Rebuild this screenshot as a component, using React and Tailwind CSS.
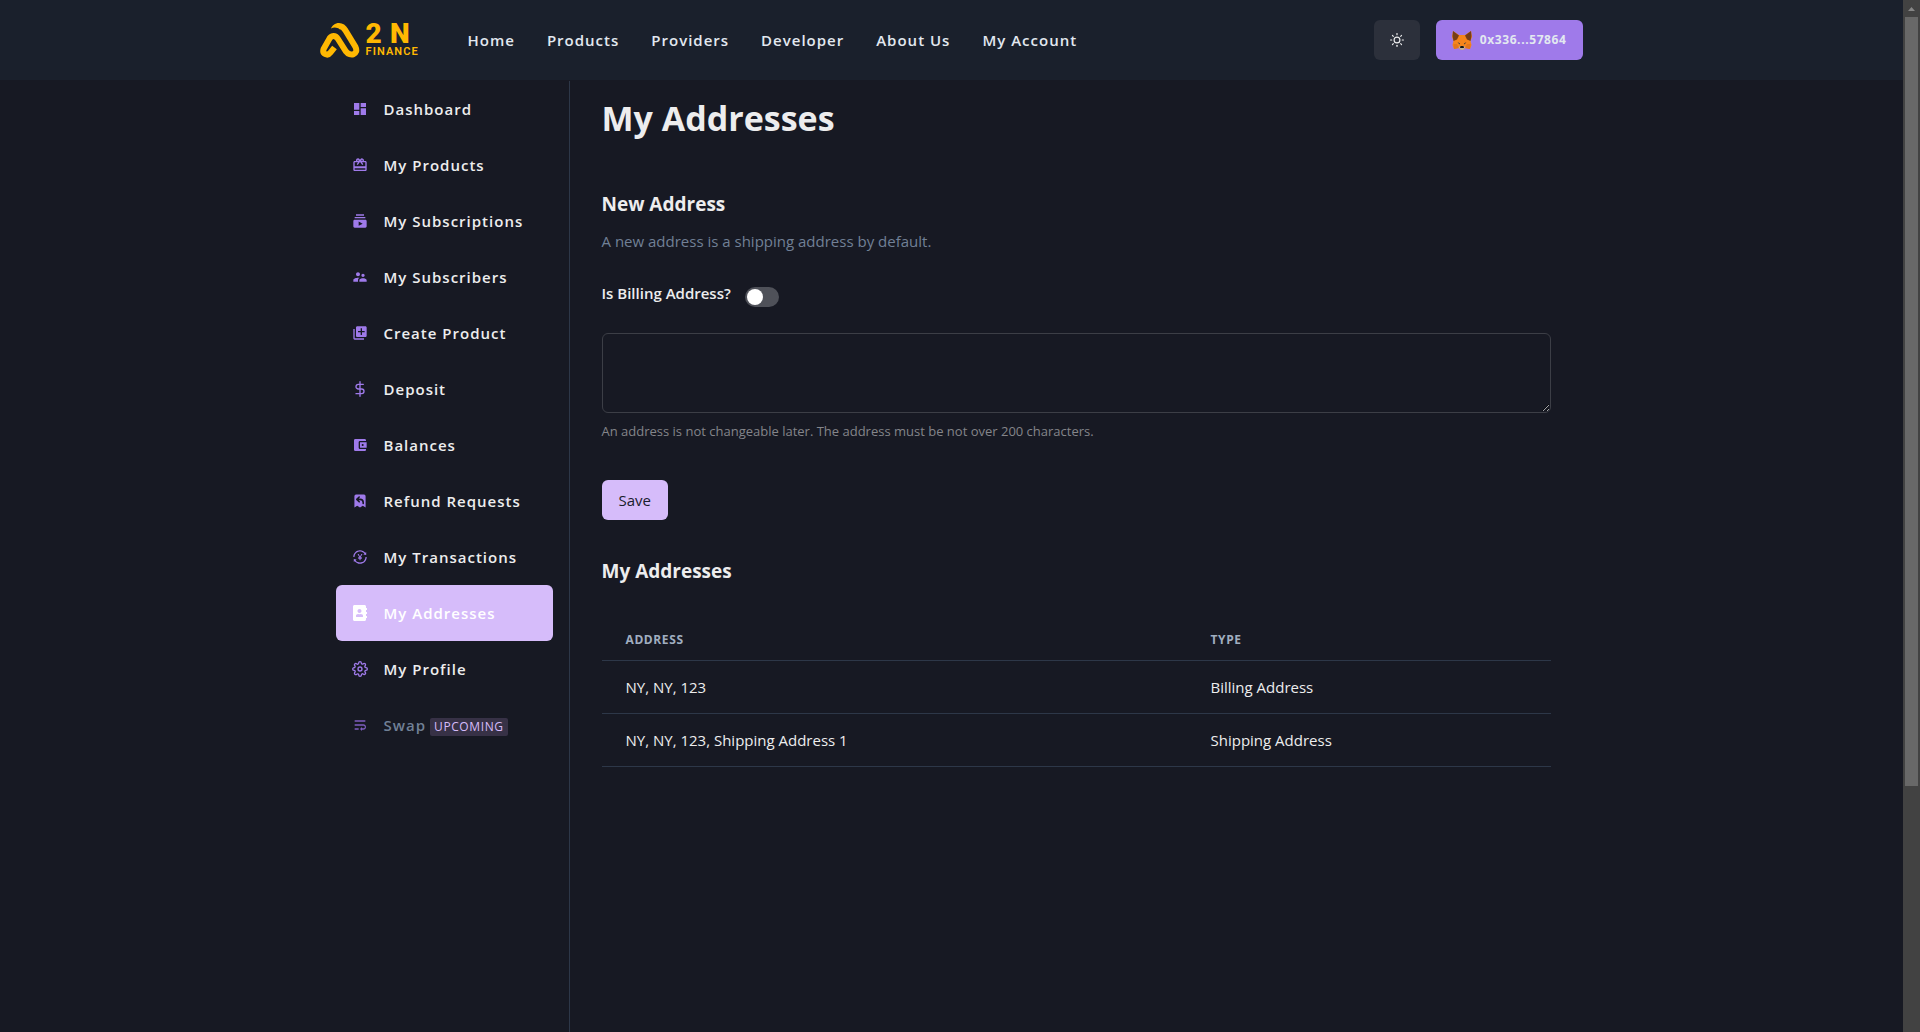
import React, { useState } from 'react';
import {
  MdDashboard,
  MdRedeem,
  MdSubscriptions,
  MdSupervisorAccount,
  MdLibraryAdd,
  MdAccountBalanceWallet,
  MdWrapText,
} from 'react-icons/md';
import { FiDollarSign, FiSettings, FiSun } from 'react-icons/fi';
import { HiReceiptRefund } from 'react-icons/hi';
import { AiOutlineTransaction } from 'react-icons/ai';
import { FaAddressBook } from 'react-icons/fa';

const navLinks = ['Home', 'Products', 'Providers', 'Developer', 'About Us', 'My Account'];

const sideLinks = [
  { label: 'Dashboard', icon: MdDashboard },
  { label: 'My Products', icon: MdRedeem },
  { label: 'My Subscriptions', icon: MdSubscriptions },
  { label: 'My Subscribers', icon: MdSupervisorAccount },
  { label: 'Create Product', icon: MdLibraryAdd },
  { label: 'Deposit', icon: FiDollarSign },
  { label: 'Balances', icon: MdAccountBalanceWallet },
  { label: 'Refund Requests', icon: HiReceiptRefund },
  { label: 'My Transactions', icon: AiOutlineTransaction },
  { label: 'My Addresses', icon: FaAddressBook, active: true },
  { label: 'My Profile', icon: FiSettings },
  { label: 'Swap', icon: MdWrapText, upcoming: true },
];

const addresses = [
  { address: 'NY, NY, 123', type: 'Billing Address' },
  { address: 'NY, NY, 123, Shipping Address 1', type: 'Shipping Address' },
];

function Logo() {
  return (
    <a href="#" aria-label="2N Finance" className="w-[100px] flex items-center gap-1.5 text-[#ffb802]">
      <svg width="40" height="36" viewBox="0 0 40 36" fill="none" stroke="currentColor" strokeWidth="6" className="shrink-0">
        <path d="M14.5 25.5L10.5 30.5C7.5 34.5 2 32 3.6 27L9 17.500C11 13 15.500 13 18 17L26 29.500C30 35 39 32.500 35.500 25L25.500 8.500C23.500 5 21 4 19 4" />
        <path d="M19 1C15 1 12 3.500 11 6.500C14 5 17 5.500 20 7Z" fill="currentColor" stroke="none" />
      </svg>
      <span className="flex flex-col font-['Roboto',sans-serif]">
        <span className="text-[28px] leading-6 font-black tracking-wide">2 N</span>
        <span className="text-[11px] leading-3 font-semibold tracking-widest">FINANCE</span>
      </span>
    </a>
  );
}

function Fox() {
  return (
    <svg width="20" height="19" viewBox="0 0 20 19">
      <path d="M1 0L7 4H13L19 0L20 6L18.500 10L19.500 14L18 18L13.500 17L11.500 19H8.500L6.500 17L2 18L0.500 14L1.500 10L0 6Z" fill="#f6851b" />
      <path d="M1 0L7 4.500L5 8.500L1.500 10L0.500 5Z" fill="#763d16" />
      <path d="M19 0L13 4.500L15 8.500L18.500 10L19.500 5Z" fill="#763d16" />
      <path d="M1.500 13L5 13L7 17L2 18Z" fill="#e4761b" />
      <path d="M18.500 13L15 13L13 17L18 18Z" fill="#e4761b" />
      <path d="M5.500 11L8 12.500L7.500 13.500Z" fill="#233447" />
      <path d="M14.500 11L12 12.500L12.500 13.500Z" fill="#233447" />
      <path d="M6.500 16L8.500 15H11.500L13.500 16L11.500 19H8.500Z" fill="#c0ad9e" />
      <path d="M8.500 15H11.500L12 17H8Z" fill="#161616" />
    </svg>
  );
}

function Header() {
  return (
    <header className="bg-[#1a202c] border-b border-[#171923]">
      <div className="max-w-7xl h-20 mx-auto pl-2 pr-[9px] flex items-center">
        <Logo />
        <nav className="flex gap-8 ml-12 flex-1">
          {navLinks.map((label) => (
            <a key={label} href="#" className="font-semibold tracking-[1px] text-[#e2e8f0] hover:text-white">
              {label}
            </a>
          ))}
        </nav>
        <div className="flex gap-4">
          <button aria-label="Toggle theme" className="h-10 px-4 rounded-md bg-[#2c303b] text-[#ededee]">
            <FiSun size={14} />
          </button>
          <button className="h-10 px-4 rounded-md bg-[#9f7aea] text-[#e2e8f0] flex items-center gap-2">
            <Fox />
            <span className="text-xs font-bold tracking-wider">0x336...57864</span>
          </button>
        </div>
      </div>
    </header>
  );
}

function Sidebar() {
  return (
    <aside className="w-[250px] shrink-0 px-4 border-r border-[#2d3748]">
      {sideLinks.map(({ label, icon: Icon, active, upcoming }) => (
        <a
          key={label}
          href="#"
          className={`h-14 px-4 flex items-center gap-4 rounded-md font-semibold tracking-[1px] ${
            active ? 'bg-[#d6bcfa] text-white' : upcoming ? 'text-[#718096]' : 'text-[#ededee]'
          }`}
        >
          <Icon size={16} className={active ? 'text-white' : upcoming ? 'text-[#805ec1]' : 'text-[#9f7aea]'} />
          <span className="flex items-center gap-1">
            {label}
            {upcoming && (
              <span className="px-1 mt-1 rounded-xs bg-[#373146] text-[#d6bcfa] text-xs leading-[18px] font-normal tracking-wider">
                UPCOMING
              </span>
            )}
          </span>
        </a>
      ))}
    </aside>
  );
}

function NewAddress() {
  const [isBilling, setIsBilling] = useState(false);

  return (
    <form onSubmit={(e) => e.preventDefault()}>
      <h2 className="mt-[52px] text-[19px] leading-6 font-bold">New Address</h2>
      <p className="mt-[13px] text-[#718096]">A new address is a shipping address by default.</p>

      <div className="mt-7 flex items-start">
        <label htmlFor="billing" className="mr-3.5 font-semibold">Is Billing Address?</label>
        <input
          id="billing"
          type="checkbox"
          role="switch"
          checked={isBilling}
          onChange={(e) => setIsBilling(e.target.checked)}
          className="appearance-none mt-1.5 w-[34px] h-5 p-0.5 rounded-full bg-[#4f5159] checked:bg-[#d6bcfa] before:block before:size-4 before:rounded-full before:bg-white checked:before:ml-3.5"
        />
      </div>

      <textarea
        aria-label="Address"
        maxLength={200}
        className="block mt-[26px] w-full h-20 px-4 py-2 rounded-md border border-[#3c3e46] bg-transparent outline-none"
      />
      <p className="mt-2 text-[13px] leading-5 text-[#84858a]">
        An address is not changeable later. The address must be not over 200 characters.
      </p>

      <button type="submit" className="mt-[39px] h-10 px-[17px] rounded-md bg-[#d6bcfa] text-[#1a202c]">Save</button>
    </form>
  );
}

function AddressTable() {
  return (
    <table className="w-full mt-[37px] text-left">
      <thead>
        <tr className="border-b border-[#2d3748] text-xs leading-4 tracking-wider text-[#a0aec0]">
          <th className="w-[585px] px-6 py-3 font-bold">ADDRESS</th>
          <th className="px-6 py-3 font-bold">TYPE</th>
        </tr>
      </thead>
      <tbody>
        {addresses.map(({ address, type }) => (
          <tr key={address} className="border-b border-[#2d3748]">
            <td className="px-6 py-3.5">{address}</td>
            <td className="px-6 py-3.5">{type}</td>
          </tr>
        ))}
      </tbody>
    </table>
  );
}

// Window scroll track with its up arrow and thumb
function ScrollTrack() {
  return (
    <div aria-hidden="true" className="w-[17px] h-screen shrink-0 bg-[#424242] flex flex-col items-center">
      <svg width="17" height="17" viewBox="0 0 17 17">
        <path d="M5 11L8.500 7L12 11Z" fill="#868686" />
      </svg>
      <div className="w-[13px] flex-1 mb-[246px] bg-[#686868]" />
    </div>
  );
}

export default function App() {
  return (
    <div className="flex h-screen overflow-hidden bg-[#171923] text-[#ededee] text-[15px] leading-6 font-['Open_Sans','Noto_Sans',sans-serif]">
      <div className="flex-1 min-w-0 flex flex-col">
        <Header />
        <div className="flex-1 w-full max-w-7xl mx-auto pl-2 pr-[9px] flex">
          <Sidebar />
          <main className="flex-1 px-8 pt-4">
            <h1 className="text-[34px] leading-[43px] font-bold">My Addresses</h1>
            <NewAddress />
            <h2 className="mt-[39px] text-[19px] leading-6 font-bold">My Addresses</h2>
            <AddressTable />
          </main>
        </div>
      </div>
      <ScrollTrack />
    </div>
  );
}
